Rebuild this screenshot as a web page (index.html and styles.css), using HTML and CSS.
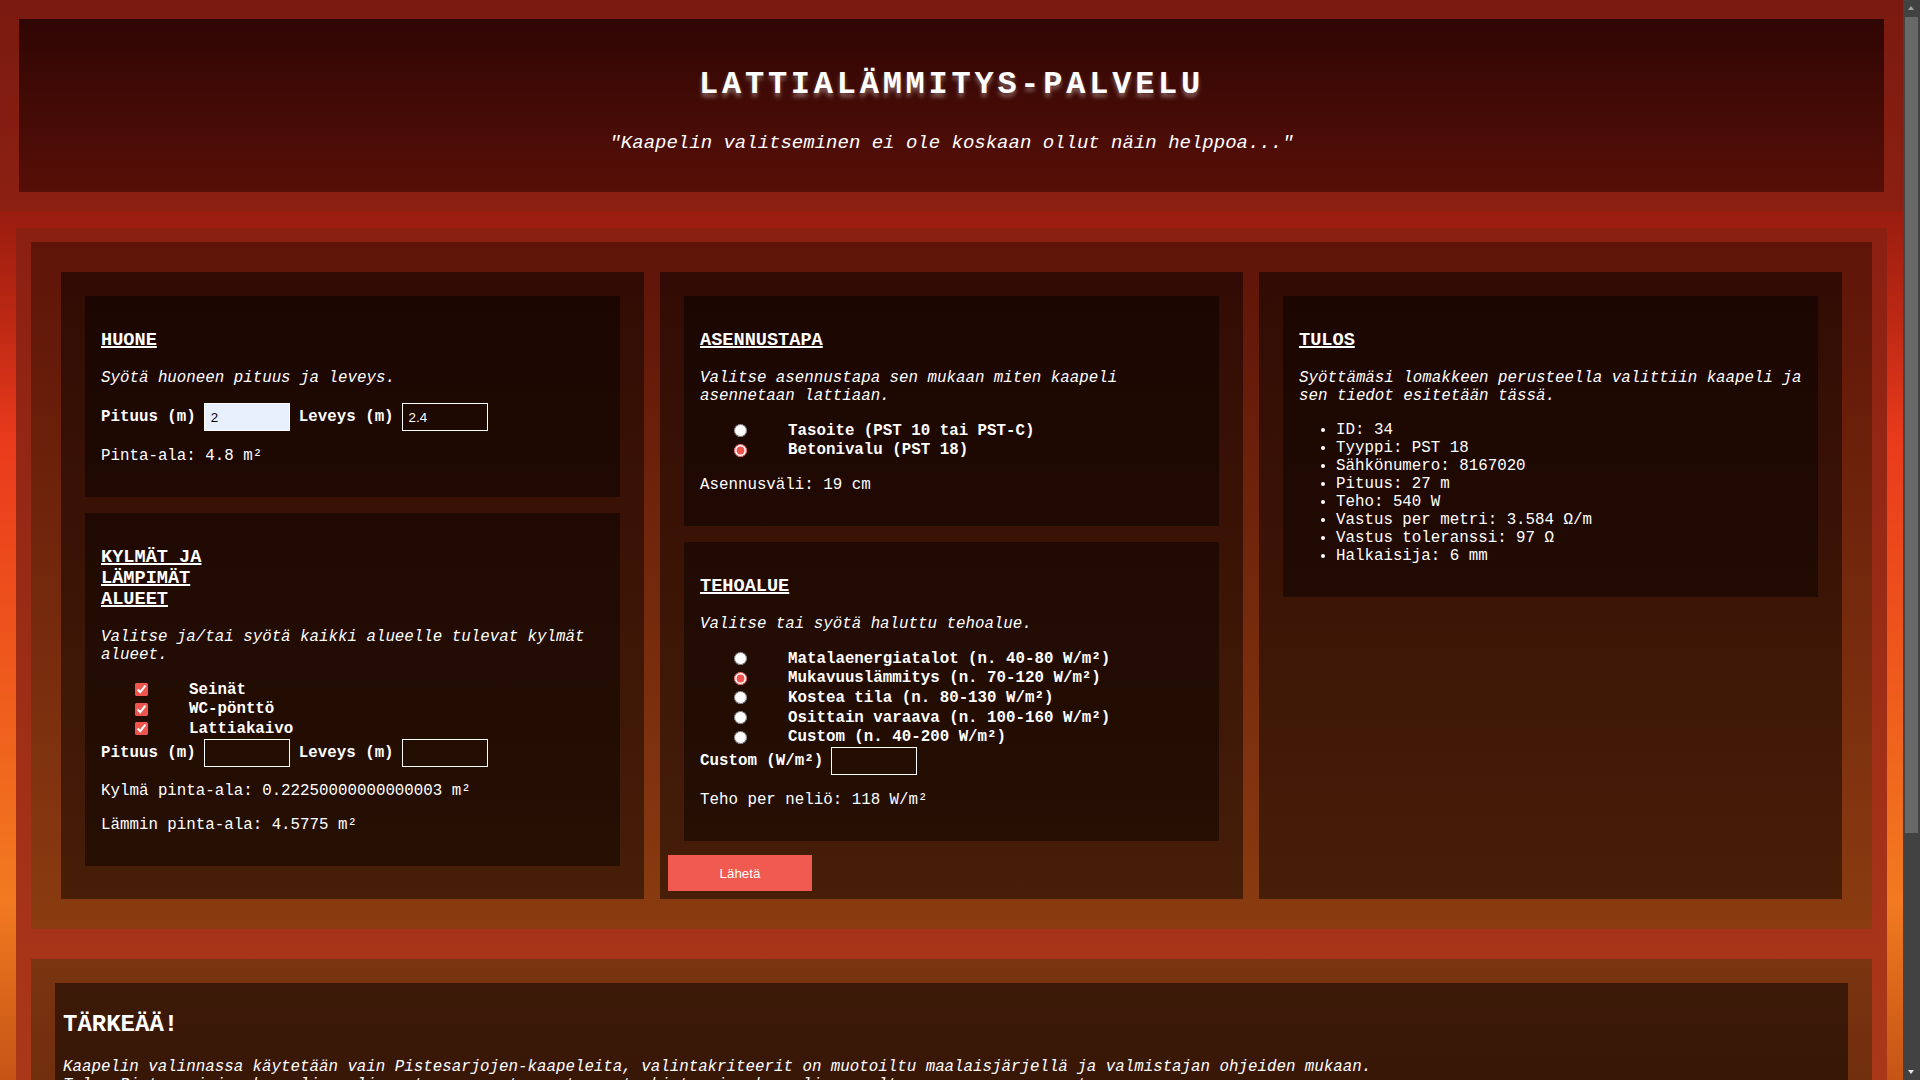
FILE: index.html
```html
<!DOCTYPE html>
<html lang="fi">
<head>
<meta charset="utf-8">
<title>Lattialämmitys-palvelu</title>
<link rel="stylesheet" href="styles.css">
</head>
<body>
<header class="site-header">
  <div class="header-box">
    <h1 class="title">LATTIALÄMMITYS-PALVELU</h1>
    <p class="tagline">"Kaapelin valitseminen ei ole koskaan ollut näin helppoa..."</p>
  </div>
</header>

<main class="page">
  <form class="calc">
    <div class="col">
      <section class="card">
        <h3 class="card-title">HUONE</h3>
        <p class="hint">Syötä huoneen pituus ja leveys.</p>
        <div class="field-row">
          <label class="lbl">Pituus (m)</label><input class="num num-filled" type="text" value="2">
          <label class="lbl">Leveys (m)</label><input class="num" type="text" value="2.4">
        </div>
        <p class="out">Pinta-ala: 4.8 m²</p>
      </section>
      <section class="card">
        <h3 class="card-title">KYLMÄT JA LÄMPIMÄT ALUEET</h3>
        <p class="hint">Valitse ja/tai syötä kaikki alueelle tulevat kylmät alueet.</p>
        <ul class="opts opts-flush">
          <li class="opt"><span class="opt-box"><input type="checkbox" checked></span><label class="opt-lbl">Seinät</label></li>
          <li class="opt"><span class="opt-box"><input type="checkbox" checked></span><label class="opt-lbl">WC-pönttö</label></li>
          <li class="opt"><span class="opt-box"><input type="checkbox" checked></span><label class="opt-lbl">Lattiakaivo</label></li>
        </ul>
        <div class="field-row field-row-flush">
          <label class="lbl">Pituus (m)</label><input class="num" type="text">
          <label class="lbl">Leveys (m)</label><input class="num" type="text">
        </div>
        <p class="out">Kylmä pinta-ala: 0.22250000000000003 m²</p>
        <p class="out">Lämmin pinta-ala: 4.5775 m²</p>
      </section>
    </div>

    <div class="col">
      <section class="card">
        <h3 class="card-title">ASENNUSTAPA</h3>
        <p class="hint">Valitse asennustapa sen mukaan miten kaapeli asennetaan lattiaan.</p>
        <ul class="opts">
          <li class="opt"><span class="opt-box"><input type="radio" name="tapa"></span><label class="opt-lbl">Tasoite (PST 10 tai PST-C)</label></li>
          <li class="opt"><span class="opt-box"><input type="radio" name="tapa" checked></span><label class="opt-lbl">Betonivalu (PST 18)</label></li>
        </ul>
        <p class="out">Asennusväli: 19 cm</p>
      </section>
      <section class="card">
        <h3 class="card-title">TEHOALUE</h3>
        <p class="hint">Valitse tai syötä haluttu tehoalue.</p>
        <ul class="opts opts-flush">
          <li class="opt"><span class="opt-box"><input type="radio" name="teho"></span><label class="opt-lbl">Matalaenergiatalot (n. 40-80 W/m²)</label></li>
          <li class="opt"><span class="opt-box"><input type="radio" name="teho" checked></span><label class="opt-lbl">Mukavuuslämmitys (n. 70-120 W/m²)</label></li>
          <li class="opt"><span class="opt-box"><input type="radio" name="teho"></span><label class="opt-lbl">Kostea tila (n. 80-130 W/m²)</label></li>
          <li class="opt"><span class="opt-box"><input type="radio" name="teho"></span><label class="opt-lbl">Osittain varaava (n. 100-160 W/m²)</label></li>
          <li class="opt"><span class="opt-box"><input type="radio" name="teho"></span><label class="opt-lbl">Custom (n. 40-200 W/m²)</label></li>
        </ul>
        <div class="field-row field-row-flush">
          <label class="lbl">Custom (W/m²)</label><input class="num" type="text">
        </div>
        <p class="out">Teho per neliö: 118 W/m²</p>
      </section>
      <button class="send" type="button">Lähetä</button>
    </div>

    <div class="col">
      <section class="card">
        <h3 class="card-title">TULOS</h3>
        <p class="hint">Syöttämäsi lomakkeen perusteella valittiin kaapeli ja sen tiedot esitetään tässä.</p>
        <ul class="result">
          <li>ID: 34</li>
          <li>Tyyppi: PST 18</li>
          <li>Sähkönumero: 8167020</li>
          <li>Pituus: 27 m</li>
          <li>Teho: 540 W</li>
          <li>Vastus per metri: 3.584 Ω/m</li>
          <li>Vastus toleranssi: 97 Ω</li>
          <li>Halkaisija: 6 mm</li>
        </ul>
      </section>
    </div>
  </form>

  <section class="notice">
    <div class="notice-box">
      <h2 class="notice-title">TÄRKEÄÄ!</h2>
      <p class="notice-text">Kaapelin valinnassa käytetään vain Pistesarjojen-kaapeleita, valintakriteerit on muotoiltu maalaisjärjellä ja valmistajan ohjeiden mukaan.<br>Tulos Pistesarjojen kaapelin valinnasta on suuntaa antava, tarkista aina kaapelin soveltuvuus ennen asennusta.</p>
      <p class="notice-text">Sähköasennukset saa tehdä vain valtuutettu sähköasentaja.</p>
    </div>
  </section>
</main>

<div class="scrollbar" aria-hidden="true">
  <span class="sb-arrow sb-up"></span>
  <span class="sb-thumb"></span>
  <span class="sb-arrow sb-down"></span>
</div>
</body>
</html>
```

FILE: styles.css
```css
* {
  box-sizing: border-box;
}

html {
  background: linear-gradient(to bottom,
    #7a1a10 0px,
    #8c2012 211px,
    #9a1c0e 212px,
    #c02a14 330px,
    #ea3a1c 440px,
    #ee561c 650px,
    #f27a20 900px,
    #c55416 1080px,
    #8a3010 1400px);
}

body {
  margin: 0 17px 0 0;
  font-family: "Liberation Mono", "Courier New", monospace;
  font-size: 15.8px;
  line-height: 18px;
  color: #ffffff;
}

/* ---------- header ---------- */
.site-header {
  padding: 19px;
  background: linear-gradient(to bottom, #7a1a10, #8c2012);
}

.header-box {
  height: 173px;
  padding: 48px 20px 0;
  text-align: center;
  background: linear-gradient(to bottom, #2f0604, #570f07);
}

.title {
  margin: 0;
  font-size: 32px;
  line-height: 36px;
  letter-spacing: 3.75px;
  font-weight: bold;
  text-shadow: 0 4px 4px rgba(255, 255, 255, 0.35);
}

.tagline {
  margin: 29px 0 0;
  font-style: italic;
  font-size: 19px;
  line-height: 22px;
}

/* ---------- main ---------- */
.page {
  margin: 17px 16px 0;
  padding: 14px 15px 30px;
  background: linear-gradient(to bottom, #8a2012 0px, #a73418 700px, #ad3a18 100%);
}

.calc {
  display: grid;
  grid-template-columns: repeat(3, 1fr);
  gap: 16px;
  padding: 30px;
  background: linear-gradient(to bottom, #5e1408, #8a3c10);
}

.col {
  display: flex;
  flex-direction: column;
  align-items: flex-start;
  padding: 24px 24px 8px;
  background: rgba(0, 0, 0, 0.48);
}

.card {
  align-self: stretch;
  padding: 16px;
  background: rgba(0, 0, 0, 0.45);
}

.card + .card {
  margin-top: 16px;
}

.card-title {
  max-width: 130px;
  margin: 18.3px 0 18px;
  font-size: 18.6px;
  line-height: 21px;
  font-weight: bold;
  text-decoration: underline;
  text-decoration-thickness: 2px;
}

.hint {
  margin: 15.8px 0;
  font-style: italic;
}

.out {
  margin: 15.8px 0;
}

.field-row {
  display: flex;
  align-items: center;
  margin: 14px 0 15.8px;
}

.field-row-flush {
  margin-top: 0;
}

.lbl {
  font-weight: bold;
  margin-right: 8px;
}

.num {
  width: 86px;
  height: 28px;
  margin: 0 9px 0 0;
  padding: 0 6px;
  border: 1px solid #ffffff;
  background: transparent;
  color: #ffffff;
  font-family: "Liberation Sans", Arial, sans-serif;
  font-size: 13.33px;
}

.num-filled {
  background: #e8f0fe;
  color: #000000;
}

.opts {
  list-style: none;
  margin: 14.6px 0 15.8px;
  padding: 0;
}

.opts-flush {
  margin-bottom: 0;
}

.opt {
  display: flex;
  align-items: center;
  height: 19.6px;
}

.opt-box {
  display: flex;
  justify-content: center;
  width: 80px;
}

.opt-box input {
  width: 13px;
  height: 13px;
  margin: 0;
  accent-color: #f0544c;
}

.opt-lbl {
  margin-left: 8px;
  font-weight: bold;
}

.send {
  width: 144px;
  height: 36px;
  margin: 14.5px 0 0 -16px;
  border: none;
  background: #f05a50;
  color: #ffffff;
  font-family: "Liberation Sans", Arial, sans-serif;
  font-size: 13.33px;
}

.result {
  margin: 15.8px 0;
  padding-left: 37px;
}

/* ---------- notice ---------- */
.notice {
  margin-top: 30px;
  padding: 24px;
  background: linear-gradient(to bottom, #7a3410, #6a2a0c);
}

.notice-box {
  padding: 8px;
  background: rgba(0, 0, 0, 0.5);
}

.notice-title {
  margin: 20px 0;
  font-size: 24px;
  line-height: 27px;
  font-weight: bold;
}

.notice-text {
  margin: 20px 0;
  font-style: italic;
}

/* ---------- window scrollbar (overlay) ---------- */
.scrollbar {
  position: fixed;
  top: 0;
  right: 0;
  width: 17px;
  height: 100vh;
  background: #424242;
}

.sb-thumb {
  position: absolute;
  top: 17px;
  left: 2px;
  right: 2px;
  height: 816px;
  background: #686868;
}

.sb-arrow {
  position: absolute;
  left: 5px;
  width: 0;
  height: 0;
  border-left: 3.5px solid transparent;
  border-right: 3.5px solid transparent;
}

.sb-up {
  top: 6px;
  border-bottom: 4px solid #a3a3a3;
}

.sb-down {
  bottom: 6px;
  border-top: 4px solid #e6e6e6;
}
```
